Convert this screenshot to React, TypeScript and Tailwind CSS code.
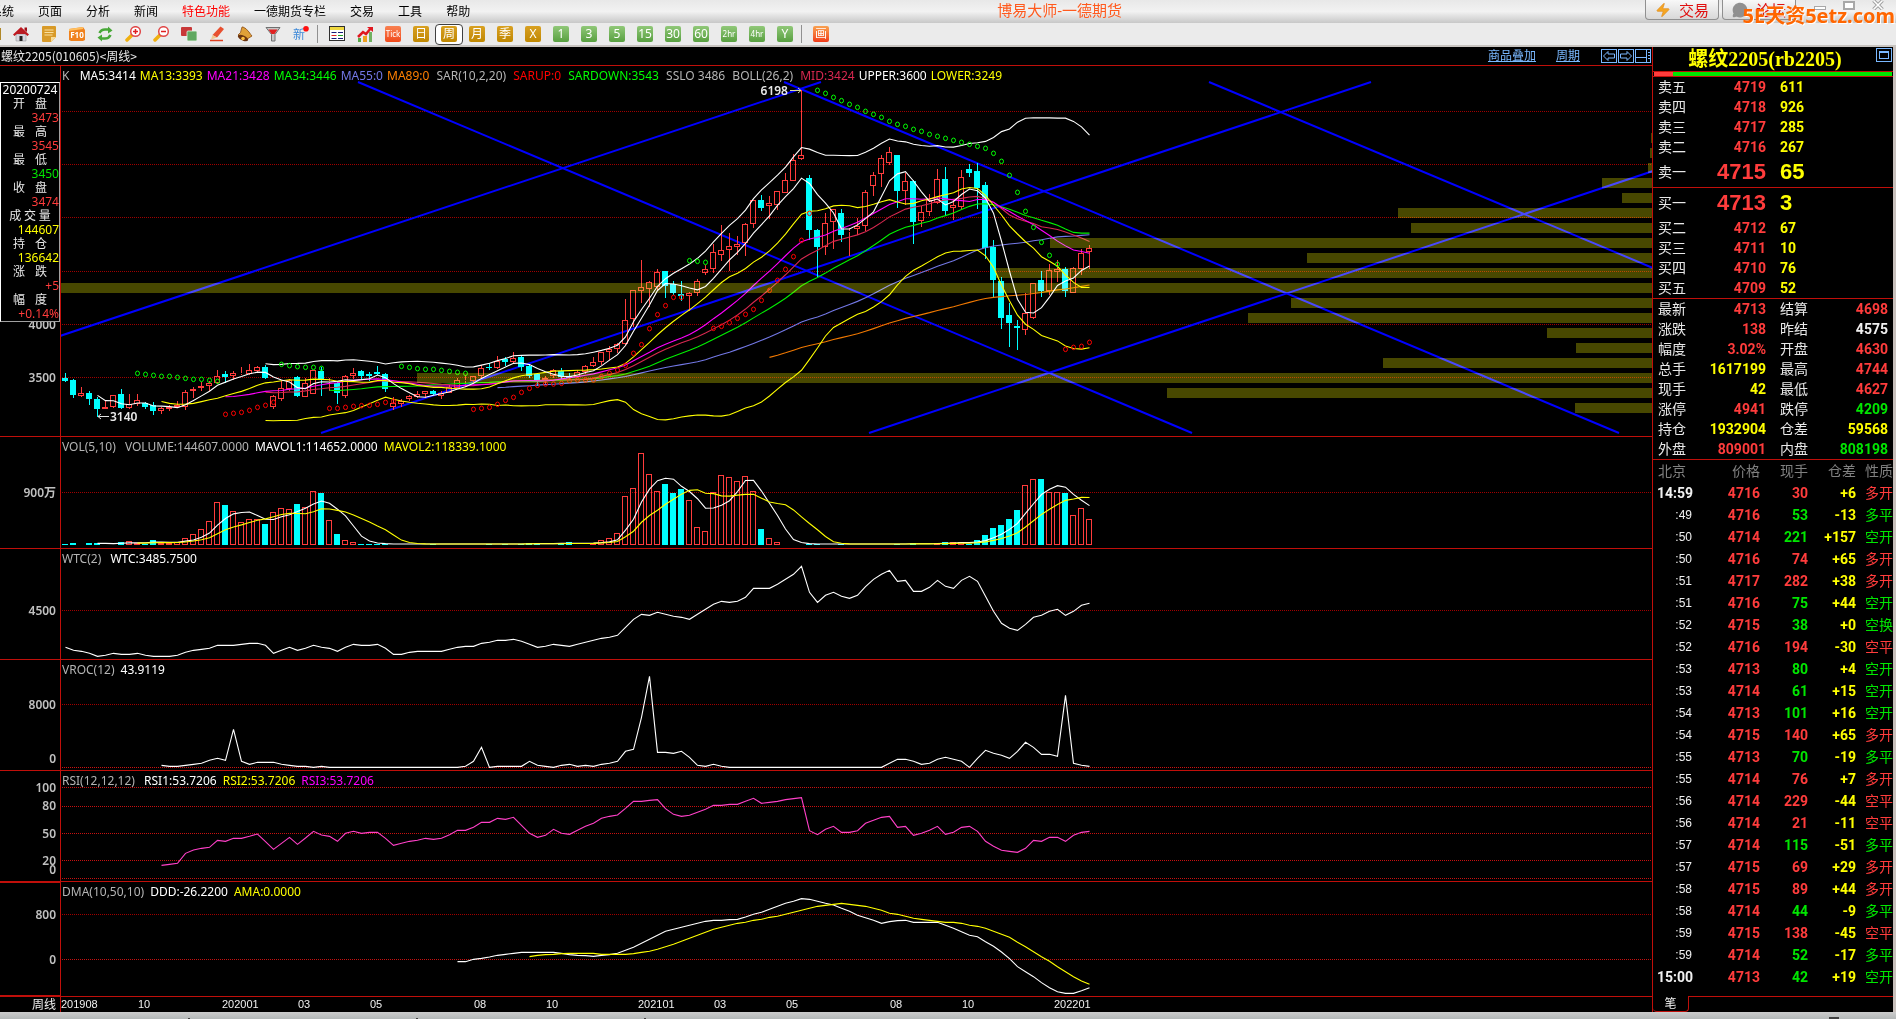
import { ReactNode } from 'react'
import { MessageCircle, Zap } from 'lucide-react'

type Tone = 'up' | 'down' | 'hold' | 'plain'

const toneClass: Record<Tone, string> = {
  up: 'text-[#ff3c3c]',
  down: 'text-[#00e600]',
  hold: 'text-[#ffff00]',
  plain: 'text-[#f0f0f0]',
}

const FIRST_X = 65
const STEP = 8
const RED = '#ff3c3c'
const CYAN = '#00ffff'

// [direction, high, body top, body bottom, low], in thirds of a plot pixel
type Candle = [number, number, number, number, number]

const candles: Candle[] = [
  [0, 938, 954, 963, 966], [0, 957, 960, 1005, 1014], [1, 982, 999, 1007, 1010], [0, 993, 999, 1017, 1035],
  [0, 1010, 1017, 1047, 1070], [1, 1021, 1042, 1046, 1048], [1, 1005, 1006, 1040, 1044], [0, 987, 1002, 1044, 1047],
  [1, 1002, 1032, 1043, 1048], [1, 1002, 1021, 1032, 1037], [0, 1026, 1030, 1041, 1046], [0, 1026, 1036, 1053, 1065],
  [1, 1040, 1045, 1053, 1061], [1, 1035, 1040, 1046, 1053], [1, 1022, 1036, 1041, 1045], [1, 990, 997, 1041, 1049],
  [1, 980, 988, 994, 1014], [1, 966, 977, 985, 992], [1, 963, 970, 978, 993], [1, 930, 947, 970, 972],
  [0, 933, 941, 950, 968], [1, 932, 940, 948, 960], [1, 922, 940, 942, 944], [1, 912, 930, 941, 945],
  [1, 918, 922, 934, 940], [0, 915, 921, 954, 957], [1, 1005, 1008, 1040, 1047], [1, 963, 985, 1016, 1024],
  [1, 958, 960, 988, 994], [0, 948, 951, 1008, 1010], [1, 955, 970, 1010, 1012], [1, 930, 931, 1001, 1002],
  [0, 922, 933, 958, 1008], [1, 955, 962, 966, 994], [0, 965, 968, 998, 1032], [1, 945, 947, 1007, 1014],
  [1, 925, 940, 948, 957], [0, 930, 934, 948, 957], [0, 936, 942, 948, 962], [0, 918, 936, 942, 944],
  [0, 939, 942, 987, 995], [1, 1012, 1030, 1040, 1050], [1, 1018, 1022, 1031, 1040], [1, 1004, 1009, 1018, 1024],
  [1, 993, 1003, 1011, 1014], [1, 992, 994, 1001, 1013], [0, 990, 993, 1001, 1005], [1, 994, 998, 1008, 1017],
  [1, 975, 980, 998, 1000], [1, 955, 961, 983, 985], [1, 945, 961, 963, 980], [1, 947, 949, 964, 970],
  [1, 914, 925, 948, 955], [0, 910, 921, 923, 932], [1, 888, 902, 923, 928], [0, 890, 898, 906, 917],
  [1, 876, 894, 905, 912], [0, 888, 891, 920, 932], [0, 912, 917, 947, 955], [0, 938, 941, 960, 976],
  [1, 948, 955, 960, 972], [1, 928, 931, 948, 953], [0, 924, 934, 950, 956], [0, 938, 948, 953, 960],
  [1, 930, 935, 950, 955], [1, 914, 918, 937, 942], [1, 892, 905, 919, 922], [1, 875, 877, 907, 915],
  [1, 858, 867, 876, 900], [1, 850, 853, 866, 878], [1, 716, 781, 851, 855], [1, 690, 691, 778, 800],
  [1, 600, 682, 692, 728], [1, 663, 667, 686, 740], [1, 627, 636, 680, 690], [0, 633, 633, 677, 713],
  [0, 663, 672, 699, 705], [0, 662, 702, 708, 722], [1, 697, 700, 707, 753], [1, 657, 664, 700, 707],
  [1, 615, 626, 638, 644], [1, 552, 577, 626, 638], [1, 495, 571, 584, 602], [1, 519, 559, 570, 633],
  [1, 528, 552, 560, 585], [1, 490, 493, 549, 588], [1, 420, 421, 491, 503], [0, 405, 420, 443, 453],
  [1, 408, 430, 437, 477], [1, 393, 394, 434, 450], [1, 339, 361, 398, 400], [1, 282, 301, 362, 363],
  [1, 91, 286, 296, 300], [0, 345, 354, 510, 541], [0, 507, 510, 560, 650], [1, 459, 490, 560, 584],
  [1, 447, 448, 485, 567], [0, 447, 459, 525, 546], [1, 505, 513, 515, 588], [1, 474, 497, 508, 524],
  [1, 391, 397, 497, 512], [1, 336, 346, 377, 407], [1, 285, 295, 341, 381], [1, 261, 277, 308, 315],
  [0, 285, 285, 393, 444], [1, 340, 364, 392, 434], [0, 360, 363, 486, 552], [1, 437, 457, 482, 500],
  [1, 402, 421, 455, 467], [1, 327, 358, 428, 432], [0, 321, 357, 452, 468], [1, 420, 435, 444, 480],
  [1, 330, 352, 440, 450], [0, 312, 327, 339, 350], [0, 309, 333, 383, 447], [0, 366, 375, 564, 597],
  [0, 540, 561, 660, 711], [0, 652, 663, 773, 807], [0, 730, 765, 789, 861], [0, 780, 797, 803, 870],
  [1, 700, 760, 811, 824], [1, 669, 670, 775, 778], [0, 633, 660, 693, 711], [1, 612, 631, 692, 706],
  [1, 600, 628, 635, 665], [0, 622, 627, 693, 711], [1, 620, 625, 698, 700], [1, 567, 580, 626, 645],
  [1, 555, 565, 577, 627],
]

const closes = candles.map(c => (c[0] ? c[2] : c[3]))

function movingAverage(values: number[], n: number) {
  const out: number[] = []
  for (let i = n - 1; i < values.length; i++) {
    out.push(values.slice(i - n + 1, i + 1).reduce((a, b) => a + b, 0) / n)
  }
  return out
}

function band(values: number[], n: number, k: number) {
  return movingAverage(values, n).map((mean, j) => {
    const part = values.slice(j, j + n)
    const variance = part.reduce((a, v) => a + (v - mean) ** 2, 0) / (n - 1)
    return mean + k * Math.sqrt(variance)
  })
}

const sarDots: { start: number; up: boolean; values: number[] }[] = [
  { start: 9, up: false, values: [940, 943, 946, 949, 949, 952, 955, 958, 958, 961, 964] },
  { start: 20, up: true, values: [1063, 1060, 1057, 1051, 1042, 1036, 1027] },
  { start: 27, up: false, values: [913, 917, 920, 922, 922, 925] },
  { start: 33, up: true, values: [1045, 1045, 1042, 1039, 1037, 1036, 1033, 1027, 1024] },
  { start: 42, up: false, values: [919, 922, 926, 928, 928, 931, 934, 937, 940] },
  {
    start: 51,
    up: true,
    values: [
      1048, 1045, 1042, 1033, 1021, 1012, 997, 985, 976, 972, 972, 970, 962, 960, 960, 960, 950, 940, 930, 916, 880,
      854, 806, 764, 737, 712, 712,
    ],
  },
  { start: 78, up: false, values: [602, 604, 607] },
  { start: 81, up: true, values: [805, 799, 788, 775, 763, 748, 721, 691, 661, 628, 590, 541, 460] },
  {
    start: 94,
    up: false,
    values: [
      91, 100, 112, 122, 133, 142, 154, 163, 172, 184, 193, 199, 208, 214, 223, 229, 235, 241, 247, 253, 259, 265, 280,
      304, 346, 397, 454, 502, 547, 586, 613,
    ],
  },
  { start: 125, up: true, values: [868, 862, 859, 847] },
]

const trendLines = [
  [60, 276, 821, 22],
  [358, 22, 1192, 373],
  [321, 373, 1371, 22],
  [784, 22, 1619, 373],
  [869, 373, 1653, 111],
  [1209, 22, 1653, 208],
]

// left edge of each price bucket, top bucket first
const profile = [
  1651, 1650, 1648, 1602, 1622, 1398, 1411, 1050, 1307, 996, 61, 1291, 1248, 1547, 1576, 1383, 417, 1167, 1575,
]

const volumes = [
  342, 339, 342, 339, 339, 342, 342, 336, 334, 339, 341, 330, 338, 338, 336, 325, 313, 298, 274, 217, 225, 244, 277,
  268, 268, 282, 247, 235, 238, 222, 232, 184, 189, 271, 312, 331, 337,
  ...Array(21).fill(342),
  339, 339, 342, 342, 339, 336, 342, 342, 338, 331, 325, 310, 199, 175, 70, 133, 184, 162, 189, 177, 211, 292, 304,
  187, 136, 142, 154, 139, 184, 297, 325, 337,
  ...Array(16).fill(342),
  339, 342, 342, 339, 336, 336, 337, 341, 330, 315, 294, 285, 267, 240, 166, 148, 147, 187, 187, 189, 256, 235, 268,
]

const wtc = [
  652, 661, 664, 670, 679, 676, 670, 673, 673, 670, 676, 679, 679, 679, 676, 667, 661, 658, 655, 646, 646, 646, 643,
  640, 640, 646, 670, 661, 652, 661, 655, 646, 652, 655, 664, 652, 643, 646, 646, 643, 655, 673, 673, 667, 664, 664,
  664, 664, 658, 652, 649, 649, 640, 637, 631, 631, 628, 634, 643, 652, 649, 643, 646, 649, 643, 637, 631, 625, 622,
  616, 592, 568, 553, 556, 547, 553, 559, 562, 568, 553, 538, 523, 514, 517, 514, 502, 475, 475, 475, 463, 448, 433,
  409, 487, 517, 496, 487, 499, 505, 496, 470, 448, 433, 421, 454, 451, 484, 484, 472, 451, 469, 475, 451, 439, 454,
  499, 544, 580, 595, 601, 583, 562, 556, 544, 538, 556, 544, 526, 520,
]

const vroc = [
  1006, 1009, 1009, 1006, 1003, 1000, 991, 985, 991, 898, 994, 1003, 997, 997, 997, 1003, 1006, 1009, 1009, 1012, 1009,
  ...Array(17).fill(1012),
  1009, 994, 952, 1012, 1009, 1009, 1009, 1009, 994, 1006, 1009, 1012, 1006, 1003, 1009, 1006, 1009, 1003, 1000, 994,
  964, 958, 862, 739, 967, 967, 970, 964, 982, 1006, 1009, 1003, 1009,
  ...Array(20).fill(1012),
  1000, 988, 988, 994, 1003, 1000, 988, 982, 988, 994, 1012, 985, 961, 970, 976, 985, 964, 937, 952, 973, 973, 979,
  796, 1000, 1006, 1009,
]

const rsi = [
  196, 193, 190, 160, 150, 145, 142, 121, 124, 115, 115, 109, 102, 125, 148, 130, 112, 133, 114, 94, 105, 109, 124,
  100, 94, 100, 97, 97, 115, 136, 130, 124, 121, 115, 118, 115, 104, 91, 91, 82, 67, 67, 55, 58, 52, 76, 100, 112,
  106, 88, 100, 103, 91, 79, 70, 55, 49, 45, 25, 4, 4, 1, -1, 26, 43, 49, 46, 37, 28, 16, 16, 13, 13, 4, -5, 10, 7,
  4, -1, -4, -7, 92, 104, 88, 79, 97, 97, 92, 70, 61, 52, 49, 82, 79, 106, 100, 91, 79, 103, 97, 82, 79, 94, 124,
  139, 151, 154, 157, 145, 121, 124, 112, 112, 124, 106, 97, 94,
]

const ddd = [
  485, 485, 478, 475, 471, 466, 463, 460, 457, 457, 457, 457, 457, 460, 464, 466, 467, 469, 466, 464, 460, 451, 442,
  430, 418, 406, 394, 388, 382, 376, 370, 364, 361, 361, 359, 358, 351, 343, 337, 328, 319, 310, 304, 296, 298, 304,
  310, 315, 325, 334, 346, 353, 361, 370, 365, 362, 361, 367, 367, 367, 367, 376, 385, 395, 406, 410, 425, 439, 456,
  476, 500, 515, 530, 548, 563, 575, 580, 580, 572, 563,
]

const ama = [
  470, 466, 464, 463, 461, 460, 460, 460, 460, 463, 463, 463, 463, 461, 457, 454, 448, 440, 433, 424, 415, 406, 397,
  388, 382, 376, 370, 367, 361, 358, 352, 349, 343, 337, 331, 325, 319, 316, 313, 310, 313, 316, 319, 325, 331, 340,
  343, 349, 355, 358, 361, 364, 367, 367, 370, 376, 379, 385, 394, 403, 412, 427, 440, 455, 470, 484, 500, 515, 530,
  543, 553,
]

function Series({ values, color }: { values: number[]; color: string }) {
  // every series ends on the last bar
  const start = candles.length - values.length
  const points = values.map((v, j) => `${FIRST_X + 0.5 + (start + j) * STEP},${v / 3}`).join(' ')
  return <polyline points={points} fill="none" stroke={color} strokeWidth="1.1" />
}

function GridLines({ at, color = '#a00000' }: { at: number[]; color?: string }) {
  return (
    <g stroke={color} strokeDasharray="1 1" shapeRendering="crispEdges">
      {at.map(y => (
        <line key={y} x1="62" x2="1652" y1={Math.floor(y / 3) + 0.5} y2={Math.floor(y / 3) + 0.5} />
      ))}
    </g>
  )
}

interface PanelProps {
  height: string
  top: number
  units: number
  legend: [string, string][]
  legendGap?: string
  labels: [string, number][]
  last?: boolean
  overlay?: ReactNode
  children: ReactNode
}

function Panel({ height, top, units, legend, legendGap = 'gap-[6px]', labels, last, overlay, children }: PanelProps) {
  return (
    <section className={`flex border-b border-[#c00f0a] ${height}`}>
      <div
        className={`relative w-[61px] shrink-0 border-r border-[#c00f0a] font-semibold text-[#c0c0c0] ${
          last ? 'border-y' : ''
        }`}
      >
        {labels.map(([text, y]) => (
          <span key={text} className="absolute right-1 -translate-y-1/2 leading-4" style={{ top: y }}>
            {text}
          </span>
        ))}
        {overlay}
      </div>
      <div className="relative min-w-0 flex-1">
        <svg
          className="block h-full w-full"
          viewBox={`61 ${top} 1591 ${units}`}
          preserveAspectRatio="none"
          aria-hidden="true"
        >
          {children}
        </svg>
        <div className={`absolute left-px top-[2px] flex whitespace-pre leading-4 ${legendGap}`}>
          {legend.map(([text, color]) => (
            <span key={text} className={color}>
              {text}
            </span>
          ))}
        </div>
      </div>
    </section>
  )
}

function PriceChart() {
  return (
    <Panel
      height="h-[371px]"
      top={6}
      units={370}
      legendGap="gap-1"
      legend={[
        ['K  ', 'text-[#b4b4b4]'],
        ['MA5:3414', 'text-white'],
        ['MA13:3393', 'text-[#ffff00]'],
        ['MA21:3428', 'text-[#ff00ff]'],
        ['MA34:3446', 'text-[#00ff00]'],
        ['MA55:0', 'text-[#7378e6]'],
        ['MA89:0 ', 'text-[#ff8000]'],
        ['SAR(10,2,20) ', 'text-[#b4b4b4]'],
        ['SARUP:0 ', 'text-[#ff0000]'],
        ['SARDOWN:3543 ', 'text-[#00ff00]'],
        ['SSLO 3486 ', 'text-[#b4b4b4]'],
        ['BOLL(26,2) ', 'text-[#b4b4b4]'],
        ['MID:3424', 'text-[#d82850]'],
        ['UPPER:3600', 'text-white'],
        ['LOWER:3249', 'text-[#ffff00]'],
      ]}
      labels={[
        ['4000', 259],
        ['3500', 312],
      ]}
      overlay={<CursorInfo />}
    >
      <GridLines at={[154, 313, 472, 634, 794, 952]} />
      <g stroke="#0000ff" strokeWidth="2">
        {trendLines.map(([x1, y1, x2, y2], i) => (
          <line key={i} x1={x1} y1={y1} x2={x2} y2={y2} />
        ))}
      </g>
      <g shapeRendering="crispEdges">
        {candles.map(([up, high, top, bottom, low], i) => {
          const x = FIRST_X + i * STEP
          const y1 = Math.round(top / 3)
          const y2 = Math.max(Math.round(bottom / 3), y1 + 1)
          return up ? (
            <g key={i} stroke={RED} fill="none">
              <path d={`M${x + 0.5} ${Math.round(high / 3)}V${y1}M${x + 0.5} ${y2}V${Math.round(low / 3)}`} />
              <rect x={x - 2.5} y={y1 + 0.5} width="5" height={y2 - y1 - 1} />
            </g>
          ) : (
            <g key={i} fill={CYAN}>
              <rect x={x} y={Math.round(high / 3)} width="1" height={Math.round((low - high) / 3)} />
              <rect x={x - 3} y={y1} width="6" height={y2 - y1} />
            </g>
          )
        })}
      </g>
      <Series values={movingAverage(closes, 89)} color="#f07800" />
      <Series values={movingAverage(closes, 55)} color="#7378e6" />
      <Series values={movingAverage(closes, 34)} color="#00f000" />
      <Series values={movingAverage(closes, 26)} color="#d82850" />
      <Series values={movingAverage(closes, 21)} color="#ff00ff" />
      <Series values={movingAverage(closes, 13)} color="#ffff00" />
      <Series values={movingAverage(closes, 5)} color="#ffffff" />
      <Series values={band(closes, 26, -2)} color="#ffffff" />
      <Series values={band(closes, 26, 2)} color="#ffff00" />
      {sarDots.map(run =>
        run.values.map((v, j) => (
          <ellipse
            key={`${run.start}-${j}`}
            cx={FIRST_X + 0.5 + (run.start + j) * STEP}
            cy={v / 3}
            rx="2"
            ry="2.3"
            fill="none"
            stroke={run.up ? '#ff0000' : '#00ff00'}
          />
        ))
      )}
      <g className="mix-blend-screen" fill="#484800" shapeRendering="crispEdges">
        {profile.map((x, i) => (
          <rect key={i} x={x} y={73 + i * 15} width={1652 - x} height="10" />
        ))}
      </g>
      <g stroke="#d8d8a0" fill="none">
        <path d="M790 30.5h11M798 28l3 2.500l-3 2.500" />
        <path d="M109 356.500h-11M101 354l-3 2.500l3 2.500" stroke="#e0e0e0" />
      </g>
      <g fill="#e8e8e8" fontSize="12" fontWeight="600">
        <text x="788" y="35" textAnchor="end">
          6198
        </text>
        <text x="110" y="361">
          3140
        </text>
      </g>
    </Panel>
  )
}

const cursorRows: [string, string, string][] = [
  ['开盘', '3473', 'text-[#ff3c3c]'],
  ['最高', '3545', 'text-[#ff3c3c]'],
  ['最低', '3450', 'text-[#00e600]'],
  ['收盘', '3474', 'text-[#ff3c3c]'],
  ['成交量', '144607', 'text-[#ffff00]'],
  ['持仓', '136642', 'text-[#ffff00]'],
  ['涨跌', '+5', 'text-[#ff3c3c]'],
  ['幅度', '+0.14%', 'text-[#ff3c3c]'],
]

function CursorInfo() {
  return (
    <dl className="absolute left-0 top-4 w-[60px] border border-white border-b-[#a0a0a0] border-r-[#a0a0a0] bg-black text-right font-normal leading-[14px]">
      <dt className="text-center text-white">20200724</dt>
      {cursorRows.map(([label, value, color]) => (
        <div key={label}>
          <dt className="mx-auto flex w-11 justify-around text-[#e8e8e8]">
            {label.split('').map(ch => (
              <span key={ch}>{ch}</span>
            ))}
          </dt>
          <dd className={color}>{value}</dd>
        </div>
      ))}
    </dl>
  )
}

function IndicatorPanels() {
  return (
    <>
      <Panel
        height="h-[112px]"
        top={7}
        units={111}
        legend={[
          ['VOL(5,10) ', 'text-[#b4b4b4]'],
          ['VOLUME:144607.0000', 'text-[#b4b4b4]'],
          ['MAVOL1:114652.0000', 'text-white'],
          ['MAVOL2:118339.1000', 'text-[#ffff00]'],
        ]}
        labels={[['900万', 56]]}
      >
        <GridLines at={[187]} />
        <g shapeRendering="crispEdges">
          {volumes.map((v, i) => {
            const x = FIRST_X + i * STEP
            const y = Math.round(v / 3)
            return candles[i][0] ? (
              <rect key={i} x={x - 2.5} y={y + 0.5} width="5" height={114 - y} fill="none" stroke={RED} />
            ) : (
              <rect key={i} x={x - 3} y={y} width="6" height={115 - y} fill={CYAN} />
            )
          })}
        </g>
        <Series values={movingAverage(volumes, 5)} color="#ffffff" />
        <Series values={movingAverage(volumes, 10)} color="#ffff00" />
      </Panel>

      <Panel
        height="h-[111px]"
        top={119}
        units={110}
        legend={[
          ['WTC(2) ', 'text-[#b4b4b4]'],
          ['WTC:3485.7500', 'text-white'],
        ]}
        labels={[['4500', 62]]}
      >
        <GridLines at={[541]} />
        <Series values={wtc} color="#ffffff" />
      </Panel>

      <Panel
        height="h-[111px]"
        top={230}
        units={110}
        legend={[
          ['VROC(12)', 'text-[#b4b4b4]'],
          ['43.9119', 'text-white'],
        ]}
        labels={[
          ['8000', 45],
          ['0', 99],
        ]}
      >
        <GridLines at={[824]} />
        <GridLines at={[1012]} color="#d01010" />
        <Series values={vroc} color="#ffffff" />
      </Panel>

      <Panel
        height="h-[111px]"
        top={-29}
        units={110}
        legend={[
          ['RSI(12,12,12) ', 'text-[#b4b4b4]'],
          ['RSI1:53.7206', 'text-white'],
          ['RSI2:53.7206', 'text-[#ffff00]'],
          ['RSI3:53.7206', 'text-[#ff00ff]'],
        ]}
        labels={[
          ['100', 17],
          ['80', 35],
          ['50', 63],
          ['20', 90],
          ['0', 99],
        ]}
      >
        <GridLines at={[-38, 19, 100, 181, 236]} color="#c81010" />
        <Series values={rsi} color="#ff40c8" />
      </Panel>

      <Panel
        height="h-[115px]"
        top={82}
        units={114}
        last
        legend={[
          ['DMA(10,50,10)', 'text-[#b4b4b4]'],
          ['DDD:-26.2200', 'text-white'],
          ['AMA:0.0000', 'text-[#ffff00]'],
        ]}
        labels={[
          ['800', 32],
          ['0', 77],
        ]}
      >
        <GridLines at={[344]} />
        <GridLines at={[479]} color="#c81010" />
        <Series values={ddd} color="#ffffff" />
        <Series values={ama} color="#ffff00" />
      </Panel>
    </>
  )
}

const dates: [string, number][] = [
  ['201908', 0],
  ['10', 77],
  ['202001', 161],
  ['03', 237],
  ['05', 309],
  ['08', 413],
  ['10', 485],
  ['202101', 577],
  ['03', 653],
  ['05', 725],
  ['08', 829],
  ['10', 901],
  ['202201', 993],
]

function DateAxis() {
  return (
    <div className="flex h-[15px] leading-[15px] text-[#f0f0f0]">
      <div className="w-[61px] shrink-0 border-r border-[#c00f0a] pr-1 text-right">周线</div>
      <div className="relative flex-1 font-['Liberation_Sans'] text-[11px]">
        {dates.map(([text, x]) => (
          <span key={x} className="absolute" style={{ left: `${(x / 1591) * 100}%` }}>
            {text}
          </span>
        ))}
      </div>
    </div>
  )
}

function ChartHeader() {
  const box = 'flex h-[14px] w-4 items-center justify-center border border-[#7ab8ff]'
  return (
    <div className="flex h-[19px] items-center border-b border-[#c00f0a] text-[#7ab8ff]">
      <h1 className="flex-1 pl-px font-['Noto_Sans_CJK_SC',sans-serif] leading-4 text-[#e8e8e8]">
        螺纹2205(010605)&lt;周线&gt;
      </h1>
      <a href="#overlay" className="mr-5 leading-4 underline">
        商品叠加
      </a>
      <a href="#period" className="mr-[21px] leading-4 underline">
        周期
      </a>
      <div className="flex gap-px pr-px">
        <button aria-label="上一个" className={box}>
          <svg width="12" height="10" fill="none" stroke="currentColor">
            <path d="M.5 5L5 .5V3h6.500v4H5v2.500z" />
          </svg>
        </button>
        <button aria-label="下一个" className={box}>
          <svg width="12" height="10" fill="none" stroke="currentColor">
            <path d="M11.500 5L7 .5V3H.5v4H7v2.500z" />
          </svg>
        </button>
        <button aria-label="分栏" className={box}>
          <svg width="14" height="12" fill="none" stroke="currentColor">
            <path d="M0 7.500h10M10.500 0v12M12 2.500h2M12 5.500h2M12 8.500h2" />
          </svg>
        </button>
      </div>
    </div>
  )
}

const asks: [string, string, string][] = [
  ['卖五', '4719', '611'],
  ['卖四', '4718', '926'],
  ['卖三', '4717', '285'],
  ['卖二', '4716', '267'],
  ['卖一', '4715', '65'],
]

const bids: [string, string, string][] = [
  ['买一', '4713', '3'],
  ['买二', '4712', '67'],
  ['买三', '4711', '10'],
  ['买四', '4710', '76'],
  ['买五', '4709', '52'],
]

function BookTable({ rows, best }: { rows: [string, string, string][]; best: string }) {
  return (
    <table className="w-full table-fixed border-b border-[#c00f0a]">
      <tbody>
        {rows.map(([label, price, size]) => (
          <tr key={label} className={label === best ? 'h-[30px]' : 'h-5'}>
            <th className="w-[45px] p-0 pl-[5px] text-left font-normal text-[#e8e8e8]">{label}</th>
            <td
              className={`w-[68px] p-0 text-right font-bold text-[#ff3c3c] ${
                label === best ? "font-['Liberation_Sans'] text-[22px] leading-5" : "font-['Roboto']"
              }`}
            >
              {price}
            </td>
            <td
              className={`p-0 pl-[14px] font-bold text-[#ffff00] ${
                label === best ? "font-['Liberation_Sans'] text-[22px] leading-5" : "font-['Roboto']"
              }`}
            >
              {size}
            </td>
          </tr>
        ))}
      </tbody>
    </table>
  )
}

const stats: [string, string, Tone, string, string, Tone][] = [
  ['最新', '4713', 'up', '结算', '4698', 'up'],
  ['涨跌', '138', 'up', '昨结', '4575', 'plain'],
  ['幅度', '3.02%', 'up', '开盘', '4630', 'up'],
  ['总手', '1617199', 'hold', '最高', '4744', 'up'],
  ['现手', '42', 'hold', '最低', '4627', 'up'],
  ['涨停', '4941', 'up', '跌停', '4209', 'down'],
  ['持仓', '1932904', 'hold', '仓差', '59568', 'hold'],
  ['外盘', '809001', 'up', '内盘', '808198', 'down'],
]

function StatsTable() {
  return (
    <table className="w-full table-fixed border-b border-[#c00f0a]">
      <tbody>
        {stats.map(([l1, v1, t1, l2, v2, t2]) => (
          <tr key={l1} className="h-5">
            <th className="w-[45px] p-0 pl-[5px] text-left font-normal text-[#e8e8e8]">{l1}</th>
            <td className={`w-[68px] p-0 text-right font-['Roboto'] font-bold ${toneClass[t1]}`}>{v1}</td>
            <th className="w-[45px] p-0 pl-[14px] text-left font-normal text-[#e8e8e8]">{l2}</th>
            <td className={`p-0 pr-[5px] text-right font-['Roboto'] font-bold ${toneClass[t2]}`}>{v2}</td>
          </tr>
        ))}
      </tbody>
    </table>
  )
}

const ticks: [string, string, string, Tone, string, string][] = [
  ['14:59', '4716', '30', 'up', '+6', '多开'],
  [':49', '4716', '53', 'down', '-13', '多平'],
  [':50', '4714', '221', 'down', '+157', '空开'],
  [':50', '4716', '74', 'up', '+65', '多开'],
  [':51', '4717', '282', 'up', '+38', '多开'],
  [':51', '4716', '75', 'down', '+44', '空开'],
  [':52', '4715', '38', 'down', '+0', '空换'],
  [':52', '4716', '194', 'up', '-30', '空平'],
  [':53', '4713', '80', 'down', '+4', '空开'],
  [':53', '4714', '61', 'down', '+15', '空开'],
  [':54', '4713', '101', 'down', '+16', '空开'],
  [':54', '4715', '140', 'up', '+65', '多开'],
  [':55', '4713', '70', 'down', '-19', '多平'],
  [':55', '4714', '76', 'up', '+7', '多开'],
  [':56', '4714', '229', 'up', '-44', '空平'],
  [':56', '4714', '21', 'up', '-11', '空平'],
  [':57', '4714', '115', 'down', '-51', '多平'],
  [':57', '4715', '69', 'up', '+29', '多开'],
  [':58', '4715', '89', 'up', '+44', '多开'],
  [':58', '4714', '44', 'down', '-9', '多平'],
  [':59', '4715', '138', 'up', '-45', '空平'],
  [':59', '4714', '52', 'down', '-17', '多平'],
  ['15:00', '4713', '42', 'down', '+19', '空开'],
]

function TickTable() {
  return (
    <table className="w-full table-fixed text-right">
      <thead>
        <tr className="h-[22px] text-[#808080]">
          <th className="w-10 p-0 pl-[5px] text-left font-normal">北京</th>
          <th className="w-[67px] p-0 font-normal">价格</th>
          <th className="w-12 p-0 font-normal">现手</th>
          <th className="w-12 p-0 font-normal">仓差</th>
          <th className="p-0 font-normal">性质</th>
        </tr>
      </thead>
      <tbody className="font-bold">
        {ticks.map(([time, price, size, tone, diff, kind], i) => (
          <tr key={i} className="h-[22px]">
            <td
              className={
                time.length > 3
                  ? "p-0 font-['Roboto'] text-[#f0f0f0]"
                  : "p-0 pr-px font-['Liberation_Sans'] text-xs font-normal text-[#f0f0f0]"
              }
            >
              {time}
            </td>
            <td className="p-0 font-['Roboto'] text-[#ff3c3c]">{price}</td>
            <td className={`p-0 font-['Roboto'] ${toneClass[tone]}`}>{size}</td>
            <td className="p-0 font-['Roboto'] text-[#ffff00]">{diff}</td>
            <td className={`p-0 font-normal ${toneClass[tone]}`}>{kind}</td>
          </tr>
        ))}
      </tbody>
    </table>
  )
}

function QuotePanel() {
  return (
    <aside className="flex w-[241px] shrink-0 flex-col border-l border-[#c00f0a] text-sm leading-5">
      <div className="relative h-6 text-center">
        <h2 className="pr-4 font-['Liberation_Serif','Noto_Sans_CJK_SC',serif] text-xl leading-6 font-bold text-[#ffff00]">
          螺纹2205(rb2205)
        </h2>
        <button
          aria-label="最大化"
          className="absolute right-px top-px flex h-[14px] w-4 items-center justify-center border border-[#7ab8ff]"
        >
          <span className="h-2 w-[10px] border border-t-2 border-[#7ab8ff]" />
        </button>
      </div>
      <div className="flex h-[6px] border-y border-[#c00f0a] px-px">
        <div className="w-[8%] bg-[#ff3c3c]" />
        <div className="flex-1 bg-[#00e600]" />
      </div>
      <BookTable rows={asks} best="卖一" />
      <BookTable rows={bids} best="买一" />
      <StatsTable />
      <TickTable />
      <div className="mt-auto flex h-4 text-xs">
        <button className="w-9 rounded-b-sm border-r border-b border-[#c00f0a] leading-[14px] text-[#f0f0f0]">
          笔
        </button>
        <div className="flex-1 border-t border-[#c00f0a]" />
      </div>
    </aside>
  )
}

const menus = ['系统', '页面', '分析', '新闻', '特色功能', '一德期货专栏', '交易', '工具', '帮助']

function MenuBar() {
  const action =
    'flex h-5 w-[74px] items-center justify-center gap-2 rounded-b border border-t-0 border-[#909090] bg-linear-to-b from-[#f8f8f8] to-[#d8d8d8]'
  return (
    <header className="relative flex h-[23px] bg-linear-to-b from-[#e8e8e8] via-[#f2f2f2] to-[#c8c8c8] text-black">
      <nav className="-ml-[22px] flex">
        {menus.map(name => (
          <button
            key={name}
            className={`px-3 leading-[22px] ${name === '特色功能' ? 'text-[#ff0000]' : ''}`}
          >
            {name}
          </button>
        ))}
      </nav>
      <div className="flex-1 pr-2 text-center text-[15px] leading-5 text-[#ff5a1e]">博易大师-一德期货</div>
      <div className="flex gap-[3px] text-[15px] leading-5 text-[#e01010]">
        <button className={action}>
          <Zap className="h-4 w-4 fill-[#f5a623] text-[#e08a1a]" strokeWidth={1} />
          交易
        </button>
        <button className={action}>
          <MessageCircle className="h-4 w-4 fill-[#909090] text-[#909090]" />
          论坛
        </button>
      </div>
      <div className="flex w-[100px] items-start justify-between pr-3 pl-[18px]">
        <button aria-label="最小化" className="mt-[6px] h-1 w-3 border border-[#a8a8a8] bg-white" />
        <button aria-label="还原" className="mt-px h-[9px] w-3 border-2 border-[#a8a8a8] bg-white" />
        <button aria-label="关闭">
          <svg width="12" height="10" viewBox="0 0 12 10" fill="none">
            <path d="M1.500 .5l9 9M10.500 .5l-9 9" stroke="#a0a0a0" strokeWidth="3.500" />
            <path d="M1.500 .5l9 9M10.500 .5l-9 9" stroke="#ffffff" strokeWidth="1.500" />
          </svg>
        </button>
      </div>
      <a
        href="#5etz"
        className="absolute right-px top-1 text-xl leading-6 font-bold whitespace-nowrap text-[#ff6600] text-shadow-[1px_1px_0_#ffffff]"
      >
        5E天资5etz.com
      </a>
    </header>
  )
}

const tools: { name: string; art: ReactNode }[] = [
  {
    name: '首页',
    art: (
      <>
        <path d="M3 8h10v7H3z" fill="#d8d8e0" stroke="#888" strokeWidth=".5" />
        <path d="M0 8.500L8 1l8 7.500-1.500 1.500L8 4.500 1.500 10z" fill="#c01820" />
        <path d="M8 2.500l5.500 5.500H2.500z" fill="#b81c24" />
        <path d="M11.500 1.500H14V6l-2.500-2z" fill="#a01018" />
        <path d="M6.500 10h3v5h-3z" fill="#222" />
      </>
    ),
  },
  {
    name: '公告',
    art: (
      <>
        <path d="M2 0h12q1 0 1 1v10l-5 5H2q-1 0-1-1V1q0-1 1-1z" fill="#d89a28" />
        <path d="M15 11l-5 5v-5z" fill="#f8dc98" />
        <path d="M3.500 4h9M3.500 6.500h9M3.500 9h8" stroke="#fae0a0" />
      </>
    ),
  },
  {
    name: 'F10',
    art: (
      <>
        <path d="M0 3l14-2 2 3v10l-2 1H2l-2-1z" fill="#f0821e" />
        <path d="M0 3l14-2v2L0 5z" fill="#ffc060" />
        <text x="8" y="12" textAnchor="middle" fontSize="8" fontWeight="700" fill="#fff">
          F10
        </text>
      </>
    ),
  },
  {
    name: '刷新',
    art: (
      <g fill="none" stroke="#48a838" strokeWidth="2.500">
        <path d="M2.500 7Q4 3.500 8 3.500h4" />
        <path d="M13.500 9Q12 12.500 8 12.500H4" />
        <path d="M11 .5l4.500 4-4.500 3zM5 8.500l-4.500 3 4.500 4z" fill="#48a838" stroke="none" />
      </g>
    ),
  },
  {
    name: '放大',
    art: (
      <>
        <path d="M7 9l-5 5" stroke="#f0b010" strokeWidth="3.500" strokeLinecap="round" />
        <circle cx="10.500" cy="5.500" r="4.800" fill="#fff" stroke="#e04848" strokeWidth="1.500" />
        <path d="M10.500 3v5M8 5.500h5" stroke="#e02020" strokeWidth="1.500" />
      </>
    ),
  },
  {
    name: '缩小',
    art: (
      <>
        <path d="M7 9l-5 5" stroke="#f0b010" strokeWidth="3.500" strokeLinecap="round" />
        <circle cx="10.500" cy="5.500" r="4.800" fill="#fff" stroke="#e04848" strokeWidth="1.500" />
        <path d="M8 5.500h5" stroke="#e02020" strokeWidth="1.500" />
      </>
    ),
  },
  {
    name: '叠加',
    art: (
      <>
        <rect x="0" y="1" width="11" height="9" rx="1" fill="#c83838" />
        <rect x="6" y="5" width="10" height="10" rx="1" fill="#60a860" stroke="#e8f4e8" strokeWidth=".8" />
      </>
    ),
  },
  {
    name: '画笔',
    art: (
      <>
        <path d="M11.500 .5l3.500 2.500-7 8.500-4.500-2.500z" fill="#e85030" />
        <path d="M3.500 9l4.500 2.500-6 2z" fill="#f0c890" />
        <path d="M1 14.500h13" stroke="#e04020" strokeWidth="1.500" />
      </>
    ),
  },
  {
    name: '预警',
    art: (
      <>
        <path d="M6 1Q9 2 12 6q2 3 3 4l-8 5-6-6q3-1 4-8z" fill="#e0a038" stroke="#8a4a10" strokeWidth=".8" />
        <ellipse cx="6" cy="12" rx="5.500" ry="2.500" fill="#6a3410" transform="rotate(24 6 12)" />
        <circle cx="6" cy="12.500" r="1.800" fill="#ffc040" />
      </>
    ),
  },
  {
    name: '筛选',
    art: (
      <>
        <path d="M1 1.500h14L10 8.500v6.500H6.500V8.500z" fill="#c8c8c8" stroke="#707070" />
        <path d="M3.500 3.500h9L9.500 8h-3z" fill="#e02020" />
      </>
    ),
  },
  {
    name: '新',
    art: (
      <>
        <text x="6" y="13" textAnchor="middle" fontSize="12" fill="#3c88d8">
          新
        </text>
        <circle cx="13" cy="2.800" r="2.800" fill="#ff1010" />
      </>
    ),
  },
]

const periods: [string, string][] = [
  ['日', 'gold'],
  ['周', 'gold'],
  ['月', 'gold'],
  ['季', 'gold'],
  ['X', 'gold'],
  ['1', 'green'],
  ['3', 'green'],
  ['5', 'green'],
  ['15', 'green'],
  ['30', 'green'],
  ['60', 'green'],
  ['2hr', 'green'],
  ['4hr', 'green'],
  ['Y', 'green'],
]

function ToolBar() {
  const box = 'flex h-[21px] w-7 items-center justify-center'
  const tile = 'flex h-4 w-4 items-center justify-center overflow-hidden rounded-xs text-white'
  return (
    <div className="flex h-6 items-center border-b-2 border-[#c8c4c0] bg-[#ebebeb]">
      <span className="mr-[6px] h-3 w-px bg-[#b08828]" />
      {tools.map(tool => (
        <button key={tool.name} aria-label={tool.name} className={box}>
          <svg width="16" height="16" viewBox="0 0 16 16">
            {tool.art}
          </svg>
        </button>
      ))}
      <span className="mr-[5px] ml-[2px] h-[18px] w-px bg-[#909090]" />
      <button aria-label="报价表" className={box}>
        <svg width="16" height="16" viewBox="0 0 16 16">
          <rect x=".5" y=".5" width="15" height="14" fill="#fff" stroke="#303030" />
          <path d="M1 1h14v3H1z" fill="#f0d840" />
          <path d="M2.500 6.500h5M9 6.500h5M2.500 12.500h5M9 12.500h5" stroke="#181878" />
          <path d="M2.500 9.500h5" stroke="#e02020" />
          <path d="M9 9.500h5" stroke="#20a020" />
        </svg>
      </button>
      <button aria-label="走势图" className={box}>
        <svg width="16" height="16" viewBox="0 0 16 16">
          <path d="M1 12h3v4H1z" fill="#58a848" />
          <path d="M6 10h4v6H6z" fill="#f0a020" />
          <path d="M12 6h3v10h-3z" fill="#70b060" />
          <path d="M1 11l5-5 3 2 5-6" fill="none" stroke="#e01820" strokeWidth="2.500" />
          <path d="M10 1h6v5z" fill="#e01820" />
        </svg>
      </button>
      <button className={box}>
        <span className={`${tile} bg-linear-to-b from-[#f88050] to-[#f04818] text-[8px]`}>Tick</span>
      </button>
      {periods.map(([text, kind]) => (
        <button
          key={text}
          aria-pressed={text === '周'}
          className={`${box} ${text === '周' ? 'rounded-sm border border-[#404040] bg-white' : ''}`}
        >
          <span
            className={`${tile} ${
              kind === 'gold'
                ? 'bg-linear-to-b from-[#d8a020] to-[#c08800]'
                : 'bg-linear-to-b from-[#90c878] to-[#58a040]'
            } ${text.length > 2 ? 'text-[8px]' : 'text-xs'}`}
          >
            {text}
          </span>
        </button>
      ))}
      <span className="mr-[5px] ml-[2px] h-[18px] w-px bg-[#909090]" />
      <button className={box}>
        <span className={`${tile} bg-linear-to-b from-[#f8a050] to-[#f03818] text-xs`}>画</span>
      </button>
    </div>
  )
}

export default function App() {
  return (
    <div className="flex min-h-screen flex-col bg-black font-['Noto_Sans','Noto_Sans_CJK_SC',sans-serif] text-xs">
      <MenuBar />
      <ToolBar />
      <div className="flex border-r-[3px] border-[#c8c0bc]">
        <main className="min-w-0 flex-1">
          <ChartHeader />
          <PriceChart />
          <IndicatorPanels />
          <DateAxis />
        </main>
        <QuotePanel />
      </div>
      <footer className="flex min-h-[7px] flex-1 items-end bg-linear-to-b from-[#cccccc] to-[#b4b8b8]">
        <span className="ml-[188px] h-px w-[2px] bg-[#404040]" />
        <span className="ml-[226px] h-px w-[2px] bg-[#404040]" />
        <span className="ml-[226px] h-px w-[2px] bg-[#404040]" />
        <span className="mr-[57px] ml-auto h-[2px] w-[10px] bg-[#404040]" />
      </footer>
    </div>
  )
}
